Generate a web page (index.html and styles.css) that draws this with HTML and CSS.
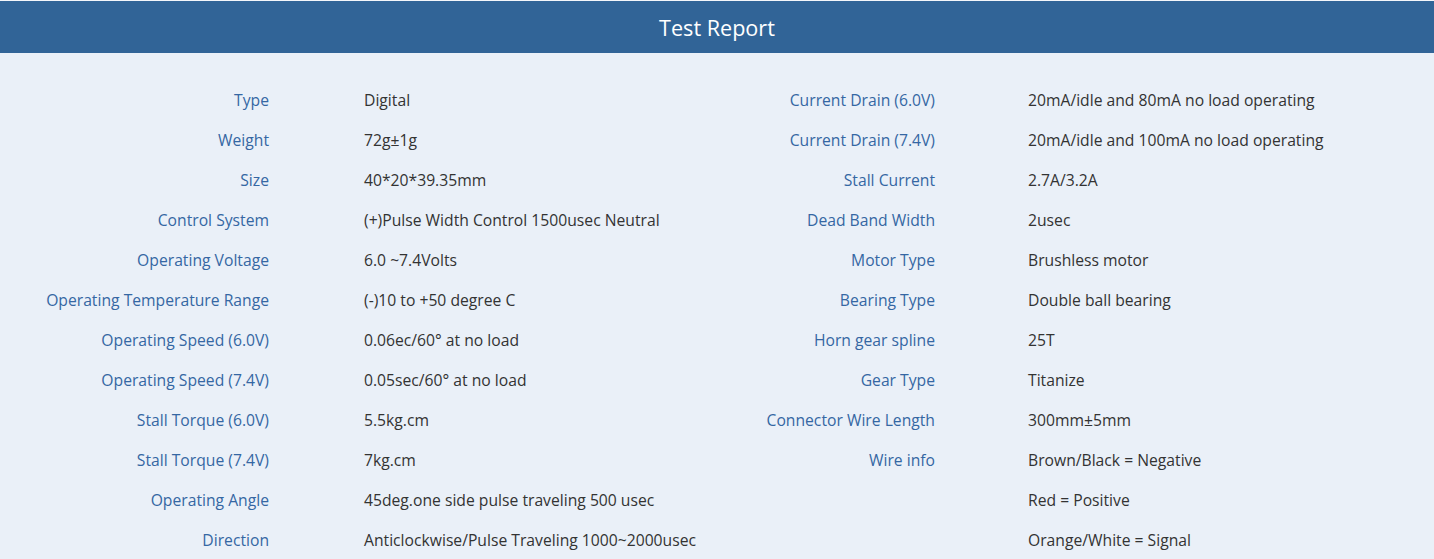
FILE: index.html
```html
<!DOCTYPE html>
<html>
<head>
<meta charset="utf-8">
<link rel="stylesheet" href="styles.css">
</head>
<body>
<div class="page">
  <header class="head"><h1 class="title">Test Report</h1></header>
  <div class="specs">
    <div class="lbl">Type</div><div class="val">Digital</div><div class="lbl r">Current Drain (6.0V)</div><div class="val">20mA/idle and 80mA no load operating</div>
    <div class="lbl">Weight</div><div class="val">72g±1g</div><div class="lbl r">Current Drain (7.4V)</div><div class="val">20mA/idle and 100mA no load operating</div>
    <div class="lbl">Size</div><div class="val">40*20*39.35mm</div><div class="lbl r">Stall Current</div><div class="val">2.7A/3.2A</div>
    <div class="lbl">Control System</div><div class="val">(+)Pulse Width Control 1500usec Neutral</div><div class="lbl r">Dead Band Width</div><div class="val">2usec</div>
    <div class="lbl">Operating Voltage</div><div class="val">6.0 ~7.4Volts</div><div class="lbl r">Motor Type</div><div class="val">Brushless motor</div>
    <div class="lbl">Operating Temperature Range</div><div class="val">(-)10 to +50 degree C</div><div class="lbl r">Bearing Type</div><div class="val">Double ball bearing</div>
    <div class="lbl">Operating Speed (6.0V)</div><div class="val">0.06ec/60° at no load</div><div class="lbl r">Horn gear spline</div><div class="val">25T</div>
    <div class="lbl">Operating Speed (7.4V)</div><div class="val">0.05sec/60° at no load</div><div class="lbl r">Gear Type</div><div class="val">Titanize</div>
    <div class="lbl">Stall Torque (6.0V)</div><div class="val">5.5kg.cm</div><div class="lbl r">Connector Wire Length</div><div class="val">300mm±5mm</div>
    <div class="lbl">Stall Torque (7.4V)</div><div class="val">7kg.cm</div><div class="lbl r">Wire info</div><div class="val">Brown/Black = Negative</div>
    <div class="lbl">Operating Angle</div><div class="val">45deg.one side pulse traveling 500 usec</div><div class="lbl r"></div><div class="val">Red = Positive</div>
    <div class="lbl">Direction</div><div class="val">Anticlockwise/Pulse Traveling 1000~2000usec</div><div class="lbl r"></div><div class="val">Orange/White = Signal</div>
  </div>
</div>
</body>
</html>
```
FILE: styles.css
```css
html, body {
  margin: 0;
  padding: 0;
  background: #eaf0f8;
}
.page {
  font-family: "Open Sans", "Noto Sans", sans-serif;
  background: #eaf0f8;
  border-top: 1px solid #f4f6fa;
  min-height: 558px;
}
.head {
  background: #316497;
  height: 52px;
  display: flex;
  align-items: center;
  justify-content: center;
}
.title {
  margin: 0;
  font-weight: 400;
  font-size: 21.6px;
  color: #ffffff;
}
.specs {
  margin-top: 27px;
  display: grid;
  grid-template-columns: 364px 396px 268px 1fr;
  grid-auto-rows: 40px;
  font-size: 15.7px;
}
.lbl, .val {
  display: flex;
  align-items: center;
  white-space: nowrap;
}
.lbl {
  justify-content: flex-end;
  padding-right: 95px;
  color: #3567a3;
}
.lbl.r {
  padding-right: 93px;
}
.val {
  color: #333333;
}
```
